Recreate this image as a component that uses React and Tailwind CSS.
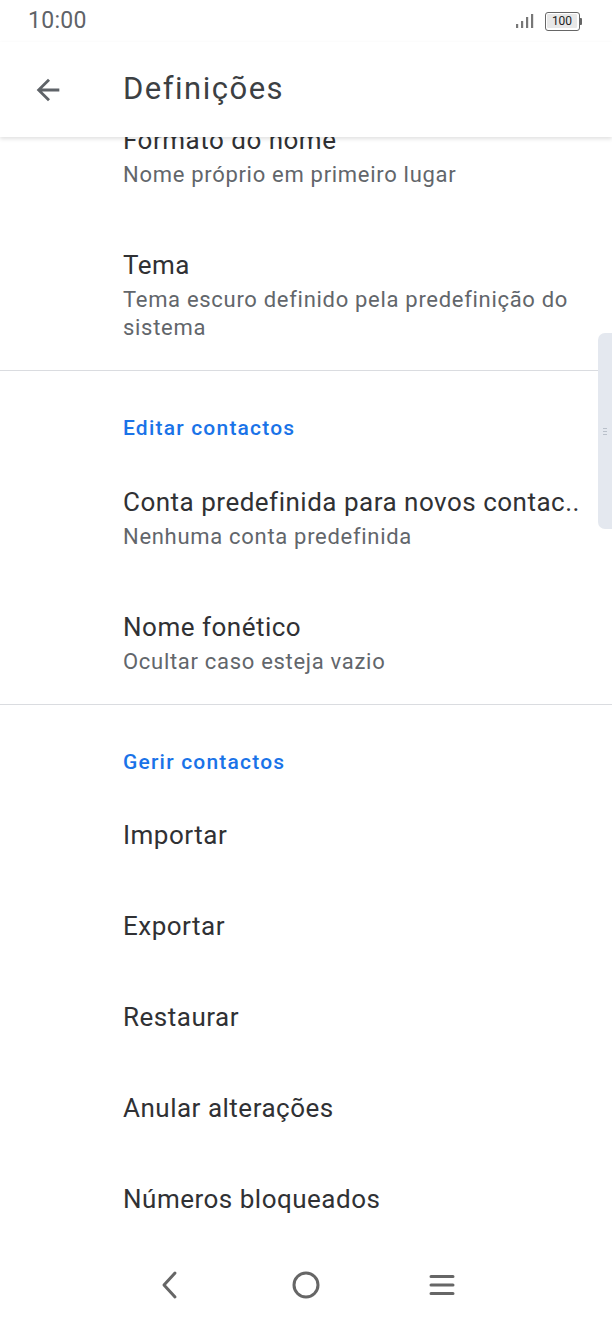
import React from "react";

const font = { fontFamily: "Roboto, 'Noto Sans', Arial, sans-serif" };

const TwoLine = ({ title, sub, pb = "pb-[30px]" }) => (
  <div className={`pl-[123px] pr-[26px] pt-[30px] ${pb}`}>
    <div className="text-[26px] tracking-[0.5px] leading-[32px] text-[#303134] whitespace-nowrap overflow-hidden">{title}</div>
    <div className="mt-[5px] text-[22px] tracking-[0.7px] leading-[28px] text-[#62666b]">{sub}</div>
  </div>
);

const OneLine = ({ title }) => (
  <div className="pl-[123px] h-[91px] flex items-center text-[26px] tracking-[0.5px] text-[#303134]">{title}</div>
);

const SectionHeader = ({ children }) => (
  <div className="pl-[123px] pt-[43px] pb-[14px] text-[21px] tracking-[1.2px] leading-[28px] font-medium text-[#1a73e8]">{children}</div>
);

export default function App() {
  return (
    <div className="w-[612px] h-[1328px] bg-white flex flex-col overflow-hidden relative" style={font}>
      {/* status bar */}
      <div className="h-[42px] flex items-center justify-between pl-[28px] pr-[30px] shrink-0">
        <span className="text-[23px] tracking-[0.3px] text-[#5f6368]">10:00</span>
        <div className="flex items-center gap-[10px]">
          <svg width="20" height="16" viewBox="0 0 20 16">
            <rect x="1" y="11" width="2.2" height="4" fill="#777" />
            <rect x="6" y="8" width="2.2" height="7" fill="#777" />
            <rect x="11" y="4" width="2.2" height="11" fill="#777" />
            <rect x="16" y="1" width="2.2" height="14" fill="#777" />
          </svg>
          <div className="flex items-center">
            <div className="w-[35px] h-[19px] border-[1.5px] border-[#666] rounded-[3px] flex items-center justify-center p-[1.5px]">
              <div className="w-full h-full bg-[#e8e8e8] rounded-[1px] flex items-center justify-center text-[12px] leading-none text-[#222]">100</div>
            </div>
            <div className="w-[2.5px] h-[7px] bg-[#666] rounded-r-[1px]" />
          </div>
        </div>
      </div>

      {/* app bar */}
      <div className="h-[95px] flex items-center shrink-0 bg-white relative z-10 shadow-[0_2px_4px_rgba(0,0,0,0.12)]">
        <div className="w-[123px] flex items-center pl-[31px]">
          <svg width="34" height="34" viewBox="0 0 24 24" fill="#5f6368">
            <path d="M20 11H7.83l5.59-5.59L12 4l-8 8 8 8 1.41-1.41L7.83 13H20v-2z" />
          </svg>
        </div>
        <span className="text-[31px] tracking-[1.5px] text-[#3c4043]">Definições</span>
      </div>

      {/* content */}
      <div className="flex-1 overflow-hidden relative">
        <div className="-mt-[43px]">
          <TwoLine title="Formato do nome" sub="Nome próprio em primeiro lugar" />
          <TwoLine title="Tema" sub="Tema escuro definido pela predefinição do sistema" pb="pb-[28px]" />
          <div className="h-px bg-[#dadce0]" />
          <SectionHeader>Editar contactos</SectionHeader>
          <TwoLine title="Conta predefinida para novos contac.." sub="Nenhuma conta predefinida" />
          <TwoLine title="Nome fonético" sub="Ocultar caso esteja vazio" pb="pb-[28px]" />
          <div className="h-px bg-[#dadce0]" />
          <SectionHeader>Gerir contactos</SectionHeader>
          <OneLine title="Importar" />
          <OneLine title="Exportar" />
          <OneLine title="Restaurar" />
          <OneLine title="Anular alterações" />
          <OneLine title="Números bloqueados" />
        </div>
      </div>

      {/* scrollbar thumb */}
      <div className="absolute left-[598px] top-[333px] w-[14px] h-[196px] bg-[#e4e8ef] rounded-l-[7px] flex items-center justify-center">
        <div className="flex flex-col gap-[2px]">
          <div className="w-[4px] h-px bg-[#b9c0ca]" />
          <div className="w-[4px] h-px bg-[#b9c0ca]" />
          <div className="w-[4px] h-px bg-[#b9c0ca]" />
        </div>
      </div>

      {/* nav bar */}
      <div className="h-[84px] shrink-0 bg-white flex items-center justify-center pb-[2px]">
        <div className="w-[136px] flex justify-center">
          <svg width="28" height="32" viewBox="0 0 28 32">
            <path d="M19 4 L8 16 L19 28" fill="none" stroke="#666" strokeWidth="3" strokeLinecap="round" strokeLinejoin="round" />
          </svg>
        </div>
        <div className="w-[136px] flex justify-center">
          <svg width="30" height="30" viewBox="0 0 30 30">
            <circle cx="15" cy="15" r="12" fill="none" stroke="#666" strokeWidth="3" />
          </svg>
        </div>
        <div className="w-[136px] flex justify-center">
          <svg width="28" height="24" viewBox="0 0 28 24">
            <path d="M3 3.5 H25 M3 12 H25 M3 20.5 H25" stroke="#666" strokeWidth="3" strokeLinecap="round" />
          </svg>
        </div>
      </div>
    </div>
  );
}
